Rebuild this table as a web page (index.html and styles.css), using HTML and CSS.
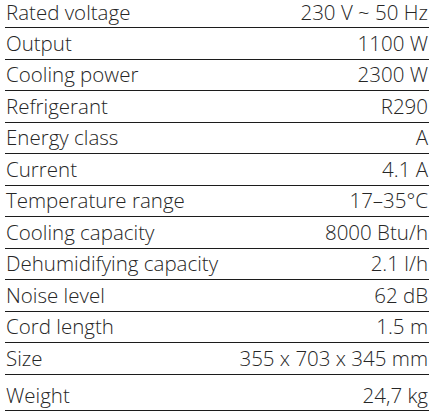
FILE: index.html
```html
<!DOCTYPE html>
<html lang="en">
<head>
<meta charset="UTF-8" />
<title>Technical data</title>
<link rel="stylesheet" href="styles.css">
</head>
<body>
<div class="specs">
    <div class="spec-row first"><span>Rated voltage</span><span>230 V ~ 50 Hz</span></div>
    <div class="spec-row"><span>Output</span><span>1100 W</span></div>
    <div class="spec-row"><span>Cooling power</span><span>2300 W</span></div>
    <div class="spec-row"><span>Refrigerant</span><span>R290</span></div>
    <div class="spec-row"><span>Energy class</span><span>A</span></div>
    <div class="spec-row"><span>Current</span><span>4.1 A</span></div>
    <div class="spec-row"><span>Temperature range</span><span>17–35°C</span></div>
    <div class="spec-row"><span>Cooling capacity</span><span>8000 Btu/h</span></div>
    <div class="spec-row"><span>Dehumidifying capacity</span><span>2.1 l/h</span></div>
    <div class="spec-row"><span>Noise level</span><span>62 dB</span></div>
    <div class="spec-row"><span>Cord length</span><span>1.5 m</span></div>
    <div class="spec-row"><span>Size</span><span>355 x 703 x 345 mm</span></div>
    <div class="spec-row last"><span>Weight</span><span>24,7 kg</span></div>
</div>
</body>
</html>
```

FILE: styles.css
```css
body {
    margin: 0;
    background-color: #ffffff;
    font-family: 'Open Sans', Lato, sans-serif;
    font-weight: 300;
    color: #262626;
}
.specs {
    margin: 0 6px 0 5px;
}
.spec-row {
    display: flex;
    justify-content: space-between;
    align-items: flex-end;
    height: 31.5px;
    box-sizing: border-box;
    border-bottom: 1px solid #1c1c1c;
    padding: 0 1px 4px 1px;
    font-size: 20.5px;
    line-height: 24px;
}
.spec-row.first {
    height: 28px;
    line-height: 22px;
}
.spec-row.last {
    height: 36px;
    padding-bottom: 3px;
}
```
